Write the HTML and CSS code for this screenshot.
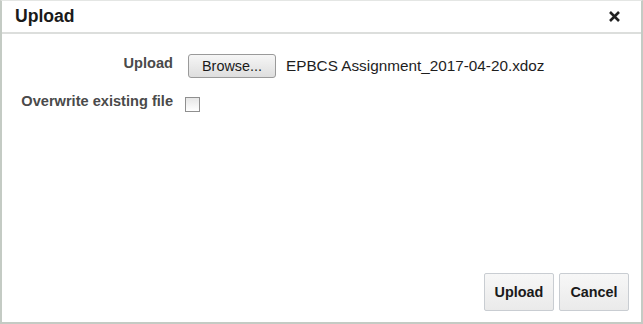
FILE: index.html
```html
<!DOCTYPE html>
<html>
<head>
<meta charset="utf-8">
<link rel="stylesheet" href="styles.css">
</head>
<body>
<div class="dialog">
  <div class="header">
    <span class="title">Upload</span>
    <span class="close" aria-label="Close">
      <svg width="13" height="13" viewBox="0 0 13 13"><path d="M2 2 L11 11 M11 2 L2 11" stroke="#222" stroke-width="2.6" stroke-linecap="butt"/></svg>
    </span>
  </div>
  <div class="body">
    <div class="form">
      <label class="label">Upload</label>
      <div class="field">
        <span class="browse">Browse...</span>
        <span class="filename">EPBCS Assignment_2017-04-20.xdoz</span>
      </div>
      <label class="label">Overwrite existing file</label>
      <div class="field">
        <span class="checkbox"></span>
      </div>
    </div>
  </div>
  <div class="footer">
    <span class="btn">Upload</span>
    <span class="btn">Cancel</span>
  </div>
</div>
</body>
</html>
```

FILE: styles.css
```css
html, body {
  margin: 0;
  padding: 0;
  background: #ffffff;
}
body {
  font-family: "Liberation Sans", Arial, sans-serif;
}
.dialog {
  width: 643px;
  height: 324px;
  box-sizing: border-box;
  border-left: 2px solid #c4cbc4;
  border-right: 2px solid #c4cbc4;
  border-bottom: 2px solid #c4cbc4;
  border-top: 1px solid #e4e6e4;
  display: flex;
  flex-direction: column;
  background: #ffffff;
}
.header {
  height: 31px;
  border-bottom: 2px solid #dcdedc;
  display: flex;
  align-items: center;
  justify-content: space-between;
  padding: 0 20px 0 13px;
}
.title {
  font-size: 17.6px;
  font-weight: bold;
  color: #1a1a1a;
}
.close {
  display: flex;
  width: 13px;
  height: 13px;
}
.body {
  flex: 1;
  padding-top: 20px;
}
.form {
  display: grid;
  grid-template-columns: 171px auto;
  column-gap: 12px;
  row-gap: 15px;
  align-items: center;
}
.label {
  text-align: right;
  font-size: 14.6px;
  font-weight: bold;
  color: #4a4a4a;
  padding-bottom: 7px;
}
.field {
  display: flex;
  align-items: center;
}
.browse {
  margin-left: 3px;
  width: 88px;
  height: 24px;
  box-sizing: border-box;
  border: 1px solid #9a9a9a;
  border-radius: 3px;
  background: linear-gradient(#f6f6f6, #dedede);
  font-size: 14.4px;
  color: #1a1a1a;
  display: flex;
  align-items: center;
  justify-content: center;
}
.filename {
  margin-left: 10px;
  font-size: 15.3px;
  color: #1e1e1e;
}
.checkbox {
  width: 15px;
  height: 15px;
  box-sizing: border-box;
  border: 1px solid #8f8f8f;
  background: linear-gradient(#e6e6e6, #ffffff);
  margin: 4px 0;
}
.footer {
  display: flex;
  justify-content: flex-end;
  gap: 5px;
  padding: 0 12px 11px 0;
}
.btn {
  width: 70px;
  height: 38px;
  box-sizing: border-box;
  border: 1px solid #c9cdd2;
  border-radius: 2px;
  background: linear-gradient(#f7f7f7, #eaeaea);
  font-size: 14.4px;
  font-weight: bold;
  color: #1a1a1a;
  display: flex;
  align-items: center;
  justify-content: center;
}
```
